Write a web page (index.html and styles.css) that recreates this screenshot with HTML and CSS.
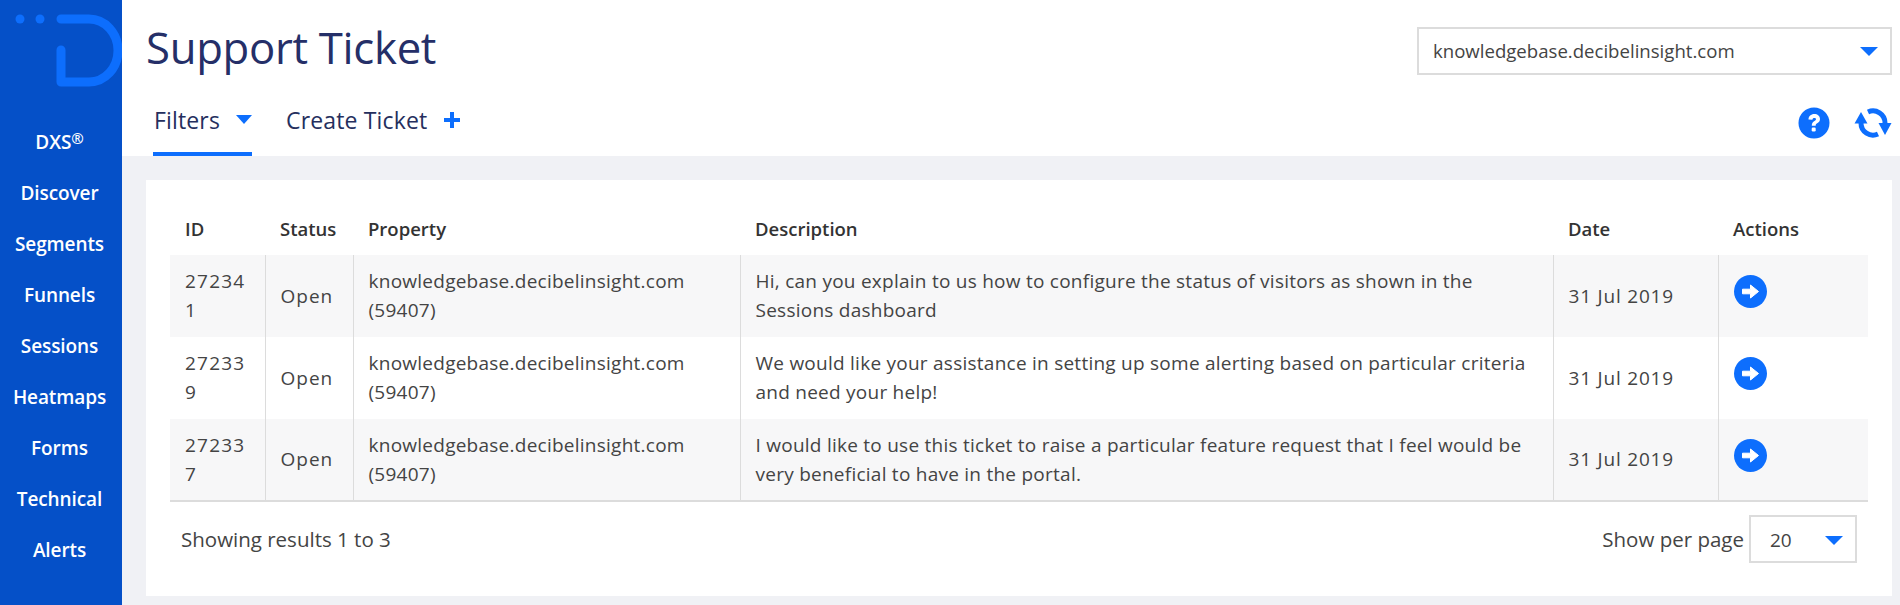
FILE: index.html
```html
<!DOCTYPE html>
<html lang="en">
<head>
<meta charset="utf-8">
<title>Support Ticket</title>
<link rel="stylesheet" href="styles.css">
</head>
<body>
<div class="app">
  <nav class="sidebar">
    <svg class="logo" viewBox="0 0 122 90" width="122" height="90" aria-hidden="true">
      <circle cx="20" cy="19" r="4.5" fill="#0d6efd"/>
      <circle cx="40" cy="19" r="4.5" fill="#0d6efd"/>
      <path d="M61 19H89A29 31.500 0 0 1 89 82H61V50" fill="none" stroke="#0d6efd" stroke-width="9" stroke-linecap="round" stroke-linejoin="round"/>
    </svg>
    <ul class="menu">
      <li>DXS<sup>®</sup></li>
      <li>Discover</li>
      <li>Segments</li>
      <li>Funnels</li>
      <li>Sessions</li>
      <li>Heatmaps</li>
      <li>Forms</li>
      <li>Technical</li>
      <li>Alerts</li>
    </ul>
  </nav>
  <main class="main">
    <header class="header">
      <div class="header-top">
        <h1 class="title">Support Ticket</h1>
        <div class="select select-site">
          <span>knowledgebase.decibelinsight.com</span>
          <i class="caret"></i>
        </div>
      </div>
      <div class="header-bottom">
        <div class="tabs">
          <div class="tab tab-active">Filters <i class="caret"></i></div>
          <div class="tab">Create Ticket
            <svg class="plus" viewBox="0 0 18 18" width="18" height="18" aria-hidden="true"><path d="M9 1v16M1 9h16" stroke="#0d6efd" stroke-width="4"/></svg>
          </div>
        </div>
        <div class="tools">
          <svg viewBox="0 0 32 32" width="32" height="32" aria-hidden="true">
            <circle cx="16" cy="16" r="15.500" fill="#0d6efd"/>
            <path d="M10.500 12.500c0-3.200 2.500-5.500 5.800-5.500 3.200 0 5.700 2.100 5.700 4.900 0 2.300-1.300 3.400-2.800 4.400-1.200.8-1.500 1.200-1.500 2.500h-3.900c0-2.400.8-3.500 2.300-4.500 1.200-.8 1.900-1.200 1.900-2.100 0-.8-.7-1.300-1.700-1.300-1.100 0-1.800.6-1.900 1.800z" fill="#fff"/>
            <rect x="13.700" y="20.500" width="4" height="4" rx="1.200" fill="#fff"/>
          </svg>
          <svg viewBox="0 0 38 34" width="38" height="34" aria-hidden="true">
            <path d="M14 6A12 12 0 0 1 31 17" fill="none" stroke="#0d6efd" stroke-width="5"/>
            <path d="M24 28A12 12 0 0 1 7 17" fill="none" stroke="#0d6efd" stroke-width="5"/>
            <path d="M24.500 17H37.500L31 29z" fill="#0d6efd"/>
            <path d="M0.500 17.500H13.500L7 6z" fill="#0d6efd"/>
          </svg>
        </div>
      </div>
    </header>
    <section class="content">
      <div class="card">
        <table class="table">
          <colgroup>
            <col class="c-id"><col class="c-status"><col class="c-prop"><col class="c-desc"><col class="c-date"><col class="c-act">
          </colgroup>
          <thead>
            <tr><th>ID</th><th>Status</th><th>Property</th><th>Description</th><th>Date</th><th>Actions</th></tr>
          </thead>
          <tbody>
            <tr>
              <td>272341</td><td class="status">Open</td><td>knowledgebase.decibelinsight.com (59407)</td>
              <td>Hi, can you explain to us how to configure the status of visitors as shown in the Sessions dashboard</td>
              <td class="date">31 Jul 2019</td>
              <td class="act"><svg class="go" viewBox="0 0 33 33" width="33" height="33" aria-hidden="true"><circle cx="16.500" cy="16.500" r="16.500" fill="#0d6efd"/><path d="M8.500 14.200h8v-4.200l8 6.500-8 6.500v-4.200h-8z" fill="#fff" stroke="#fff" stroke-linejoin="round"/></svg></td>
            </tr>
            <tr>
              <td>272339</td><td class="status">Open</td><td>knowledgebase.decibelinsight.com (59407)</td>
              <td>We would like your assistance in setting up some alerting based on particular criteria and need your help!</td>
              <td class="date">31 Jul 2019</td>
              <td class="act"><svg class="go" viewBox="0 0 33 33" width="33" height="33" aria-hidden="true"><circle cx="16.500" cy="16.500" r="16.500" fill="#0d6efd"/><path d="M8.500 14.200h8v-4.200l8 6.500-8 6.500v-4.200h-8z" fill="#fff" stroke="#fff" stroke-linejoin="round"/></svg></td>
            </tr>
            <tr>
              <td>272337</td><td class="status">Open</td><td>knowledgebase.decibelinsight.com (59407)</td>
              <td>I would like to use this ticket to raise a particular feature request that I feel would be very beneficial to have in the portal.</td>
              <td class="date">31 Jul 2019</td>
              <td class="act"><svg class="go" viewBox="0 0 33 33" width="33" height="33" aria-hidden="true"><circle cx="16.500" cy="16.500" r="16.500" fill="#0d6efd"/><path d="M8.500 14.200h8v-4.200l8 6.500-8 6.500v-4.200h-8z" fill="#fff" stroke="#fff" stroke-linejoin="round"/></svg></td>
            </tr>
          </tbody>
        </table>
        <div class="footer">
          <span class="results">Showing results 1 to 3</span>
          <div class="perpage">
            <span>Show per page</span>
            <div class="select select-page"><span>20</span><i class="caret"></i></div>
          </div>
        </div>
      </div>
    </section>
  </main>
</div>
</body>
</html>
```

FILE: styles.css
```css
* { box-sizing: border-box; }
html, body { margin: 0; height: 100%; overflow: hidden; }
body { font-family: "Open Sans", "Noto Sans", sans-serif; color: #444; background: #f0f1f5; }
.app { display: flex; height: 605px; }

.sidebar { width: 122px; flex: none; background: #0550c8; overflow: hidden; }
.logo { display: block; }
.menu { list-style: none; margin: 27px 0 0; padding: 0 3px 0 0; }
.menu li { height: 51px; line-height: 51px; text-align: center; color: #fff; font-size: 19px; font-weight: 600; letter-spacing: -0.1px; }
.menu sup { font-size: 15px; line-height: 0; vertical-align: 5px; }

.main { flex: 1; display: flex; flex-direction: column; min-width: 0; }
.header { background: #fff; height: 156px; padding: 0 8px 0 24px; display: flex; flex-direction: column; }
.header-top { display: flex; justify-content: space-between; align-items: flex-start; height: 96px; }
.title { margin: 17px 0 0; font-size: 43.700px; line-height: 60px; font-weight: 400; color: #252f68; letter-spacing: -0.3px; }
.select { display: flex; align-items: center; justify-content: space-between; border: 2px solid #dcdcdc; background: #fff; color: #444; }
.select-site { width: 475px; height: 48px; margin-top: 27px; padding: 0 12px 2px 14px; font-size: 18.600px; }
.select-page { width: 108px; height: 48px; padding: 3px 12px 0 19px; font-size: 19px; }
.caret { display: inline-block; width: 0; height: 0; border-left: 9px solid transparent; border-right: 9px solid transparent; border-top: 9px solid #0d6efd; }
.select-site .caret { margin-top: 2px; }

.header-bottom { display: flex; justify-content: space-between; flex: 1; }
.tabs { display: flex; padding-left: 7px; gap: 33px; }
.tab { display: flex; align-items: center; gap: 16px; height: 60px; padding: 0 0 9px 1px; font-size: 23px; letter-spacing: 0.15px; color: #252f5e; border-bottom: 4px solid transparent; }
.tab-active { border-bottom-color: #0d6efd; }
.tab .caret { border-left-width: 8.500px; border-right-width: 8.500px; }
.tools { display: flex; align-items: center; gap: 24px; padding: 0 0 6px; }

.content { flex: 1; padding: 24px 8px 9px 24px; min-height: 0; }
.card { background: #fff; height: 100%; padding: 0 24px; }
.table { width: 100%; border-collapse: collapse; table-layout: fixed; font-size: 19px; letter-spacing: 0.25px; line-height: 29px; border-bottom: 2px solid #dcdcdc; }
.c-id { width: 95px; }
.c-status { width: 88px; }
.c-prop { width: 387px; }
.c-desc { width: 813px; }
.c-date { width: 165px; }
.table th { height: 75px; padding: 21px 15px 0; text-align: left; font-size: 18.500px; letter-spacing: 0; font-weight: 600; color: #333; vertical-align: middle; }
.table td { height: 82px; padding: 0 15px; vertical-align: middle; border-left: 1px solid #dcdcdc; overflow-wrap: anywhere; }
.table td:first-child { border-left: 0; letter-spacing: 1.2px; }
.table td.status { letter-spacing: 1px; }
.table td.date { letter-spacing: 0.8px; }
.table tbody tr:nth-child(odd) td { background: #f7f7f8; }
.act { padding-bottom: 8px !important; }
.go { display: block; margin-top: -1px; }

.footer { display: flex; justify-content: space-between; align-items: center; height: 93px; padding: 0 11px 20px; color: #444; font-size: 20.500px; }
.perpage { display: flex; align-items: center; gap: 5px; }
```
